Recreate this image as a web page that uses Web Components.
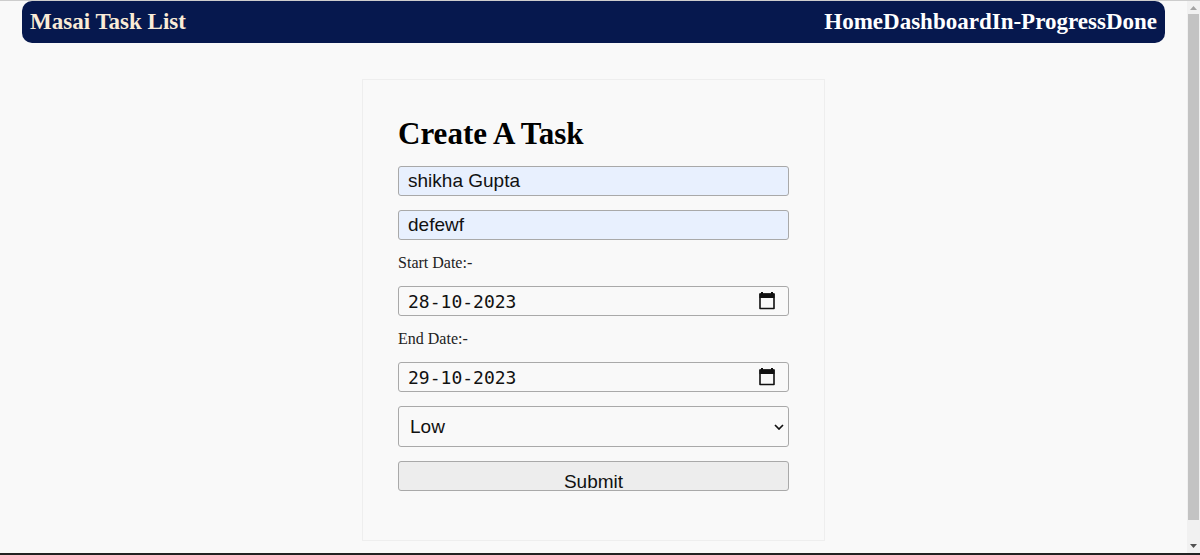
<!DOCTYPE html>
<html lang="en">
<head>
<meta charset="utf-8">
<title>Masai Task List</title>
<style>
  body { margin: 0; background: #f9f9f9; font-family: "Liberation Serif", "Times New Roman", serif; color: #000; }
</style>
</head>
<body>
<app-shell>
  <nav-bar slot="header">
    <span slot="brand">Masai Task List</span>
    <nav-link href="#home">Home</nav-link><nav-link href="#dashboard">Dashboard</nav-link><nav-link href="#progress">In-Progress</nav-link><nav-link href="#done">Done</nav-link>
  </nav-bar>
  <task-form></task-form>
</app-shell>

<script>
  class Base extends HTMLElement {
    constructor() {
      super();
      this.attachShadow({ mode: "open" }).innerHTML = this.render();
    }
  }

  customElements.define("app-shell", class extends Base {
    render() {
      return `<style>
        :host { display: flex; flex-direction: column; min-height: 100vh; box-sizing: border-box;
          border-top: 1px solid #cdcdcd; border-bottom: 2px solid #222; }
        .body { display: flex; flex: 1; }
        .page { flex: 1; min-width: 0; padding-bottom: 12px; box-sizing: border-box; }
        main { display: flex; justify-content: center; padding-top: 36px; }
      </style>
      <div class="body">
        <div class="page"><slot name="header"></slot><main><slot></slot></main></div>
        <scroll-track aria-hidden="true"></scroll-track>
      </div>`;
    }
  });

  customElements.define("scroll-track", class extends Base {
    render() {
      return `<style>
        :host { display: flex; flex-direction: column; width: 13px; background: #f1f1f1; }
        svg { display: block; width: 13px; height: 13px; }
        svg.down { height: 16px; margin-top: 17px; }
        .thumb { flex: 1; margin: 0 1px; background: #c3c3c3; }
      </style>
      <svg viewBox="0 0 13 13"><path d="M3 9 6.500 5 10 9z" fill="#a3a3a3"/></svg>
      <div class="thumb"></div>
      <svg class="down" viewBox="0 0 13 16"><path d="M3 7h7L6.500 11z" fill="#505050"/></svg>`;
    }
  });

  customElements.define("nav-bar", class extends Base {
    render() {
      return `<style>
        :host { display: block; margin: 0 22px; }
        header { display: flex; justify-content: space-between; align-items: center; height: 42px;
          padding: 0 8px; background: #06184e; border-radius: 10px; font-size: 23px; font-weight: bold; }
        .brand { color: #faebd7; }
        nav { display: flex; }
      </style>
      <header><div class="brand"><slot name="brand"></slot></div><nav><slot></slot></nav></header>`;
    }
  });

  customElements.define("nav-link", class extends HTMLElement {
    connectedCallback() {
      if (this.shadowRoot) return;
      this.attachShadow({ mode: "open" }).innerHTML = `<style>
        :host { display: block; } a { color: #fff; text-decoration: none; }
      </style><a><slot></slot></a>`;
      this.shadowRoot.querySelector("a").href = this.getAttribute("href");
    }
  });

  customElements.define("text-field", class extends HTMLElement {
    connectedCallback() {
      if (this.shadowRoot) return;
      this.attachShadow({ mode: "open" }).innerHTML = `<style>
        :host { display: block; }
        input { display: block; width: 100%; height: 30px; box-sizing: border-box; margin: 0; padding: 0 9px;
          border: 1px solid #a9a9a9; border-radius: 3px; background: #e8f0fe; color: #111;
          font: 19px "Liberation Sans", Arial, sans-serif; }
      </style><input type="text">`;
      const input = this.shadowRoot.querySelector("input");
      input.value = this.getAttribute("value");
      input.setAttribute("aria-label", this.getAttribute("label"));
    }
  });

  customElements.define("date-field", class extends HTMLElement {
    connectedCallback() {
      if (this.shadowRoot) return;
      this.attachShadow({ mode: "open" }).innerHTML = `<style>
        :host { display: flex; flex-direction: column; gap: 14px; }
        label { font-size: 16px; line-height: 18px; color: #222; }
        .box { display: flex; align-items: center; height: 30px; box-sizing: border-box; padding: 0 12px 0 9px;
          border: 1px solid #a9a9a9; border-radius: 3px; }
        input { flex: 1; min-width: 0; height: 28px; margin: 0; padding: 0; border: 0; outline: 0; background: none;
          color: #111; font: 18px "DejaVu Sans Mono", monospace; }
        button { display: block; padding: 0; border: 0; background: none; }
        svg { display: block; width: 18px; height: 20px; }
      </style>
      <label for="date"><slot></slot></label>
      <div class="box"><input id="date" type="text">
        <button type="button" aria-label="Choose date"><svg viewBox="0 0 18 20">
          <path d="M4 1v3M14 1v3" stroke="#111" stroke-width="2"/>
          <path d="M2 3h14v14.500H2z" fill="none" stroke="#111" stroke-width="1.600" stroke-linejoin="round"/>
          <path d="M1.500 2.500h15V7h-15z" fill="#111"/>
        </svg></button>
      </div>`;
      this.shadowRoot.querySelector("input").value = this.getAttribute("value");
    }
  });

  customElements.define("priority-select", class extends Base {
    render() {
      return `<style>
        :host { display: grid; align-items: center; }
        select, svg { grid-area: 1 / 1; }
        select { appearance: none; width: 100%; height: 41px; box-sizing: border-box; margin: 0; padding: 0 11px;
          border: 1px solid #a9a9a9; border-radius: 3px; background: #f9f9f9; color: #111;
          font: 19px "Liberation Sans", Arial, sans-serif; }
        svg { justify-self: end; width: 10px; height: 6px; margin-right: 5px; pointer-events: none; }
      </style>
      <select aria-label="Priority"><option>Low</option><option>Medium</option><option>High</option></select>
      <svg viewBox="0 0 10 6"><path d="M1 1l4 4 4-4" fill="none" stroke="#111" stroke-width="1.700"/></svg>`;
    }
  });

  customElements.define("submit-button", class extends Base {
    render() {
      return `<style>
        :host { display: block; }
        button { display: block; width: 100%; height: 30px; box-sizing: border-box; margin: 0; padding: 11px 0 0;
          overflow: hidden; border: 1px solid #a9a9a9; border-radius: 3px; background: #ededed; color: #111;
          font: 19px/18px "Liberation Sans", Arial, sans-serif; }
      </style><button type="submit"><slot></slot></button>`;
    }
  });

  customElements.define("task-form", class extends Base {
    render() {
      return `<style>
        :host { display: block; width: 39%; min-width: 300px; }
        form { display: flex; flex-direction: column; gap: 14px; padding: 36px 35px 49px; border: 1px solid #eee; }
        h1 { margin: 0; font-size: 31px; line-height: 36px; }
      </style>
      <form>
        <h1>Create A Task</h1>
        <text-field label="Name" value="shikha Gupta"></text-field>
        <text-field label="Description" value="defewf"></text-field>
        <date-field value="28-10-2023">Start Date:-</date-field>
        <date-field value="29-10-2023">End Date:-</date-field>
        <priority-select></priority-select>
        <submit-button>Submit</submit-button>
      </form>`;
    }
  });
</script>
</body>
</html>
